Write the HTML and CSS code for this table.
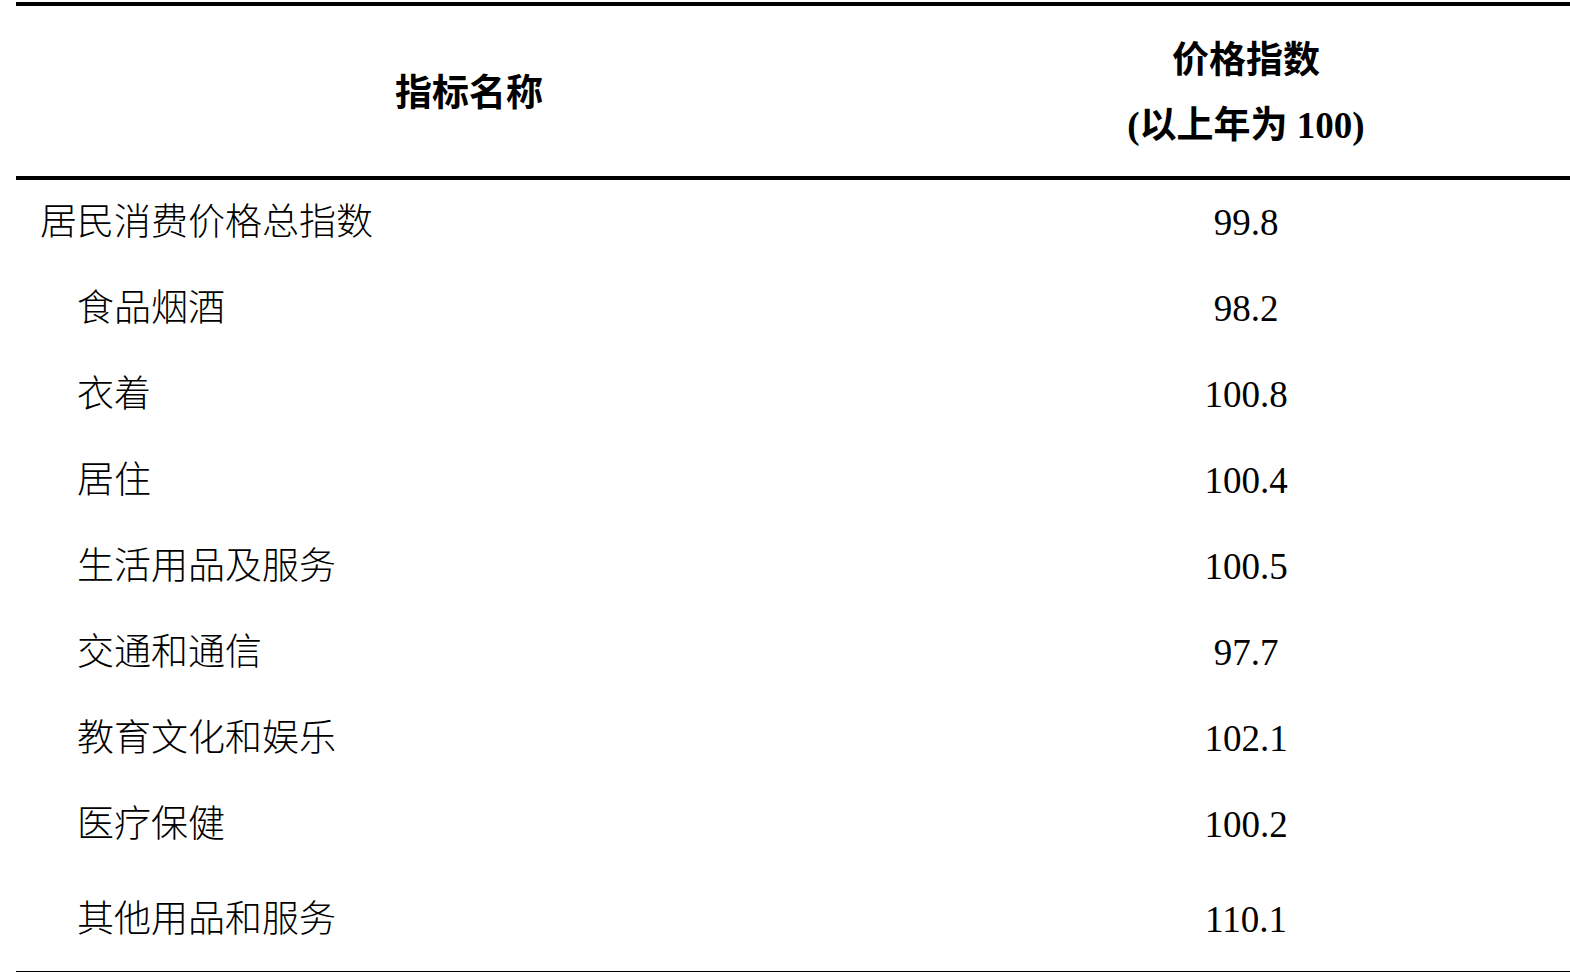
FILE: index.html
```html
<!DOCTYPE html>
<html lang="zh-CN">
<head>
<meta charset="utf-8">
<title>居民消费价格指数</title>
<link rel="stylesheet" href="styles.css">
</head>
<body>
<table class="cpi">
  <thead>
    <tr>
      <th class="name-head">指标名称</th>
      <th class="value-head">价格指数<br>(以上年为 100)</th>
    </tr>
  </thead>
  <tbody>
    <tr><td class="name">居民消费价格总指数</td><td class="value">99.8</td></tr>
    <tr><td class="name sub">食品烟酒</td><td class="value">98.2</td></tr>
    <tr><td class="name sub">衣着</td><td class="value">100.8</td></tr>
    <tr><td class="name sub">居住</td><td class="value">100.4</td></tr>
    <tr><td class="name sub">生活用品及服务</td><td class="value">100.5</td></tr>
    <tr><td class="name sub">交通和通信</td><td class="value">97.7</td></tr>
    <tr><td class="name sub">教育文化和娱乐</td><td class="value">102.1</td></tr>
    <tr><td class="name sub">医疗保健</td><td class="value">100.2</td></tr>
    <tr class="last"><td class="name sub">其他用品和服务</td><td class="value">110.1</td></tr>
  </tbody>
</table>
</body>
</html>
```
FILE: styles.css
```css
html, body {
  margin: 0;
  padding: 0;
  background: #ffffff;
}
body {
  padding-top: 2px;
  font-family: "Liberation Serif", "Noto Sans CJK SC", serif;
  color: #000000;
}
.cpi {
  margin-left: 16px;
  width: 1554px;
  border-collapse: separate;
  border-spacing: 0;
  table-layout: fixed;
  border-top: 4px solid #000;
  border-bottom: 4px solid #000;
  font-size: 37px;
}
.cpi th {
  box-sizing: border-box;
  height: 174px;
  padding: 4px 0 0 0;
  border-bottom: 4px solid #000;
  font-weight: 700;
  text-align: center;
  vertical-align: middle;
  line-height: 65px;
}
.name-head {
  width: 906px;
}
.cpi td {
  box-sizing: border-box;
  height: 86px;
  padding: 0;
  vertical-align: middle;
  line-height: 44px;
  font-weight: 300;
}
.cpi .last td {
  height: 103px;
}
.name {
  padding-left: 24px !important;
  text-align: left;
}
.name.sub {
  padding-left: 61px !important;
}
.value {
  text-align: center;
}
```
